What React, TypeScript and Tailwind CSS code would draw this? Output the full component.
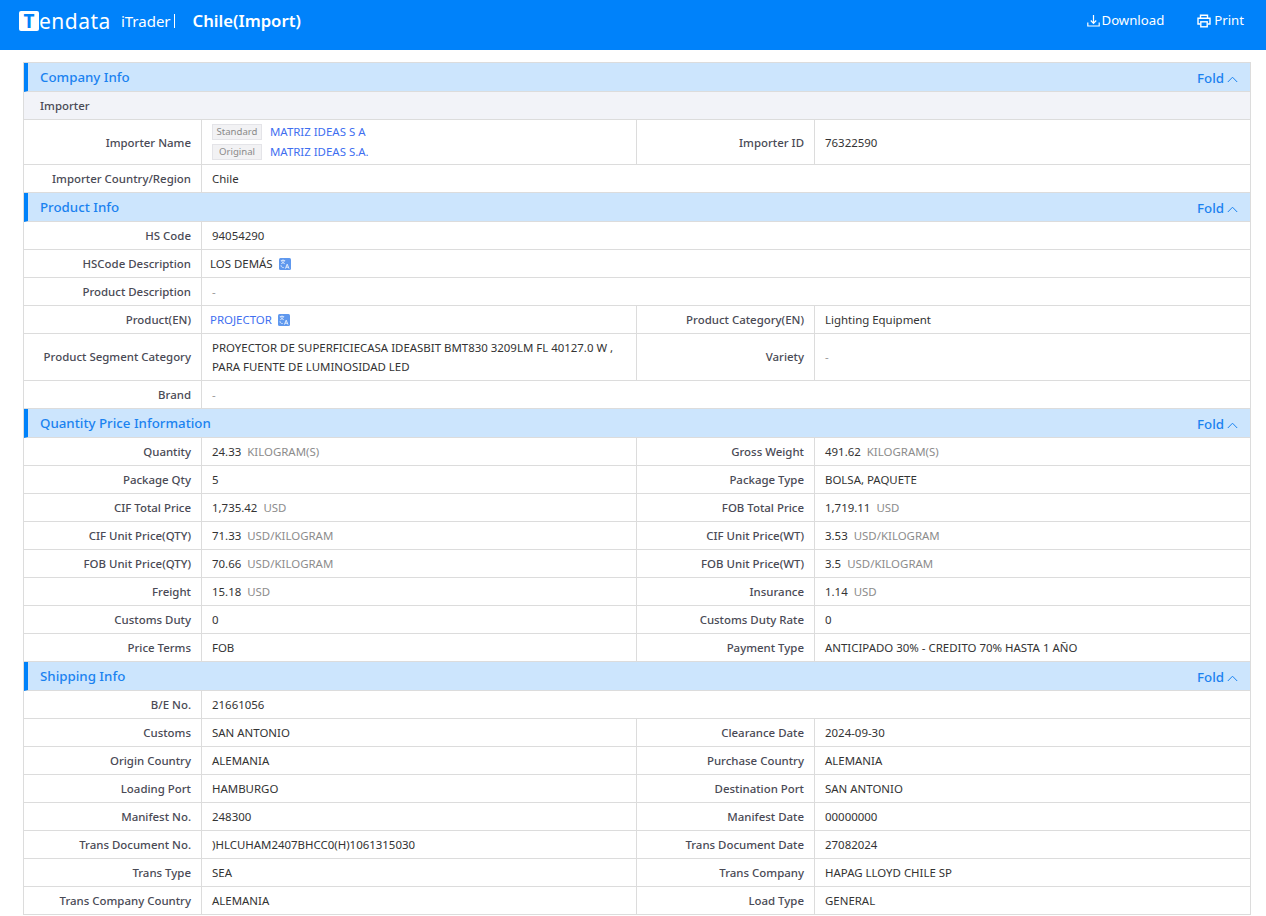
const FONT = "font-['Noto_Sans','Open_Sans',sans-serif]";

type Cell = { label: string; value?: string; unit?: string };

function TranslateIcon() {
  return (
    <svg width="12" height="12" viewBox="0 0 12 12" className="ml-[6px] shrink-0">
      <rect width="12" height="12" rx="1.5" fill="#5f98ee" />
      <path d="M1.8 2.6h4.4M4 1.4v1.2M2.6 2.8c.5 1.4 1.6 2.4 3.2 2.9M5.4 2.8C4.9 4.2 3.8 5.2 2.2 5.7" stroke="#fff" strokeWidth="0.7" fill="none" />
      <path d="M6.4 10.6l1.8-4.4 1.8 4.4M7 9.2h2.4" stroke="#fff" strokeWidth="0.8" fill="none" />
      <path d="M2 7.2c0 1.6 1 2.4 2.8 2.4" stroke="#fff" strokeWidth="0.7" fill="none" />
    </svg>
  );
}

function Label({ children, nudge }: { children: React.ReactNode; nudge?: boolean }) {
  return (
    <div className={`${nudge ? "pt-[2px]" : ""} w-[178px] shrink-0 flex items-center justify-end pr-[10px] text-[11.45px] font-medium text-[#4a4a55] border-r border-[#dcdcdc]`}>
      {children}
    </div>
  );
}

function Value({ value, unit }: { value?: string; unit?: string }) {
  return (
    <div className="flex-1 min-w-0 flex items-center pl-[10px] text-[11.45px] text-[#333]">
      {value ? <span>{value}</span> : <span className="text-[#999]">-</span>}
      {unit && <span className="ml-[6px] text-[#8c8c8c]">{unit}</span>}
    </div>
  );
}

function Row({ left, right }: { left: Cell; right?: Cell }) {
  return (
    <div className="flex h-[28px] border-b border-[#dcdcdc]">
      <Label>{left.label}</Label>
      {right ? (
        <>
          <div className="w-[435px] shrink-0 flex border-r border-[#dcdcdc]">
            <Value value={left.value} unit={left.unit} />
          </div>
          <Label>{right.label}</Label>
          <Value value={right.value} unit={right.unit} />
        </>
      ) : (
        <Value value={left.value} unit={left.unit} />
      )}
    </div>
  );
}

function Section({ title }: { title: string }) {
  return (
    <div className="flex items-center justify-between h-[29px] bg-[#cce5fd] border-l-[4px] border-l-[#0082fa] border-b border-b-[#dcdcdc] pl-[12px] pr-[12px]">
      <span className="pt-[2px] text-[13.3px] font-medium text-[#1a82f0]">{title}</span>
      <span className="pt-[4px] flex items-center gap-[3px] text-[13.3px] font-medium text-[#1a82f0]">
        Fold
        <svg width="11" height="7" viewBox="0 0 11 7" fill="none" stroke="#1a82f0" strokeWidth="1">
          <path d="M0.8 6L5.5 1.2L10.2 6" />
        </svg>
      </span>
    </div>
  );
}

function Tag({ children }: { children: string }) {
  return (
    <span className="w-[50px] h-[16px] flex items-center justify-center bg-[#f2f2f4] border border-[#e4e4e8] text-[9.6px] text-[#8a8a8a] mr-[8px]">
      {children}
    </span>
  );
}

export default function App() {
  return (
    <div className={`${FONT} bg-white w-[1266px] h-[916px] overflow-hidden`}>
      <header className="h-[50px] bg-[#0082fa] flex items-start justify-between text-white pl-[19px] pr-[22px] pt-[9px]">
        <div className="flex items-center h-[24px]">
          <div className="flex items-center">
            <span className="w-[20px] h-[20px] bg-white rounded-[2px] flex items-center justify-center text-[#0082fa] text-[19px] font-bold leading-none">T</span>
            <span className="text-[21px] leading-none tracking-[0.5px]">endata</span>
          </div>
          <span className="ml-[10px] text-[15px] leading-none">iTrader</span>
          <span className="ml-[3px] w-[1px] h-[14px] bg-white" />
          <span className="ml-[18px] text-[16.7px] font-semibold">Chile(Import)</span>
        </div>
        <div className="flex items-center h-[24px] text-[13.2px]">
          <span className="flex items-center">
            <svg width="13" height="13" viewBox="0 0 13 13" fill="none" stroke="#fff" strokeWidth="1.2" className="mr-[2px]">
              <path d="M6.5 1v8M3.8 6.5l2.7 2.8 2.7-2.8M0.8 8.5v3.5h11.4V8.5" />
            </svg>
            Download
          </span>
          <span className="flex items-center ml-[33px]">
            <svg width="14" height="14" viewBox="0 0 14 14" fill="none" stroke="#fff" strokeWidth="1.4" className="mr-[3px]">
              <path d="M3.5 4V1.2h7V4M3 10H1V4.2h12V10h-2" />
              <rect x="3.8" y="7.8" width="6.4" height="5" />
            </svg>
            Print
          </span>
        </div>
      </header>

      <main className="ml-[23px] w-[1228px] mt-[12px] border border-[#dcdcdc] border-b-0">
        <Section title="Company Info" />
        <div className="h-[28px] bg-[#f2f3f8] border-b border-[#dcdcdc] flex items-center pl-[16px] text-[11.45px] font-medium text-[#4a4a55]">Importer</div>
        <div className="flex h-[45px] border-b border-[#dcdcdc]">
          <Label nudge>Importer Name</Label>
          <div className="w-[435px] shrink-0 border-r border-[#dcdcdc] pl-[10px] flex flex-col justify-center gap-[4px] text-[11.45px] text-[#3f6ff0]">
            <div className="flex items-center h-[16px]"><Tag>Standard</Tag>MATRIZ IDEAS S A</div>
            <div className="flex items-center h-[16px]"><Tag>Original</Tag>MATRIZ IDEAS S.A.</div>
          </div>
          <Label nudge>Importer ID</Label>
          <div className="flex-1 flex items-center pt-[2px]"><Value value="76322590" /></div>
        </div>
        <Row left={{ label: "Importer Country/Region", value: "Chile" }} />

        <Section title="Product Info" />
        <Row left={{ label: "HS Code", value: "94054290" }} />
        <div className="flex h-[28px] border-b border-[#dcdcdc]">
          <Label>HSCode Description</Label>
          <div className="flex items-center pl-[8px] text-[11.45px] text-[#333]">LOS DEMÁS<TranslateIcon /></div>
        </div>
        <Row left={{ label: "Product Description" }} />
        <div className="flex h-[28px] border-b border-[#dcdcdc]">
          <Label>Product(EN)</Label>
          <div className="w-[435px] shrink-0 border-r border-[#dcdcdc] flex items-center pl-[8px] text-[11.45px] text-[#3f6ff0]">PROJECTOR<TranslateIcon /></div>
          <Label>Product Category(EN)</Label>
          <Value value="Lighting Equipment" />
        </div>
        <div className="flex h-[47px] border-b border-[#dcdcdc]">
          <Label>Product Segment Category</Label>
          <div className="w-[435px] shrink-0 border-r border-[#dcdcdc] flex items-center px-[10px] text-[11.45px] leading-[19px] text-[#333]">
            PROYECTOR DE SUPERFICIECASA IDEASBIT BMT830 3209LM FL 40127.0 W , PARA FUENTE DE LUMINOSIDAD LED
          </div>
          <Label>Variety</Label>
          <Value />
        </div>
        <Row left={{ label: "Brand" }} />

        <Section title="Quantity Price Information" />
        <Row left={{ label: "Quantity", value: "24.33", unit: "KILOGRAM(S)" }} right={{ label: "Gross Weight", value: "491.62", unit: "KILOGRAM(S)" }} />
        <Row left={{ label: "Package Qty", value: "5" }} right={{ label: "Package Type", value: "BOLSA, PAQUETE" }} />
        <Row left={{ label: "CIF Total Price", value: "1,735.42", unit: "USD" }} right={{ label: "FOB Total Price", value: "1,719.11", unit: "USD" }} />
        <Row left={{ label: "CIF Unit Price(QTY)", value: "71.33", unit: "USD/KILOGRAM" }} right={{ label: "CIF Unit Price(WT)", value: "3.53", unit: "USD/KILOGRAM" }} />
        <Row left={{ label: "FOB Unit Price(QTY)", value: "70.66", unit: "USD/KILOGRAM" }} right={{ label: "FOB Unit Price(WT)", value: "3.5", unit: "USD/KILOGRAM" }} />
        <Row left={{ label: "Freight", value: "15.18", unit: "USD" }} right={{ label: "Insurance", value: "1.14", unit: "USD" }} />
        <Row left={{ label: "Customs Duty", value: "0" }} right={{ label: "Customs Duty Rate", value: "0" }} />
        <Row left={{ label: "Price Terms", value: "FOB" }} right={{ label: "Payment Type", value: "ANTICIPADO 30% - CREDITO 70% HASTA 1 AÑO" }} />

        <Section title="Shipping Info" />
        <Row left={{ label: "B/E No.", value: "21661056" }} />
        <Row left={{ label: "Customs", value: "SAN ANTONIO" }} right={{ label: "Clearance Date", value: "2024-09-30" }} />
        <Row left={{ label: "Origin Country", value: "ALEMANIA" }} right={{ label: "Purchase Country", value: "ALEMANIA" }} />
        <Row left={{ label: "Loading Port", value: "HAMBURGO" }} right={{ label: "Destination Port", value: "SAN ANTONIO" }} />
        <Row left={{ label: "Manifest No.", value: "248300" }} right={{ label: "Manifest Date", value: "00000000" }} />
        <Row left={{ label: "Trans Document No.", value: ")HLCUHAM2407BHCC0(H)1061315030" }} right={{ label: "Trans Document Date", value: "27082024" }} />
        <Row left={{ label: "Trans Type", value: "SEA" }} right={{ label: "Trans Company", value: "HAPAG LLOYD CHILE SP" }} />
        <Row left={{ label: "Trans Company Country", value: "ALEMANIA" }} right={{ label: "Load Type", value: "GENERAL" }} />
      </main>
    </div>
  );
}
